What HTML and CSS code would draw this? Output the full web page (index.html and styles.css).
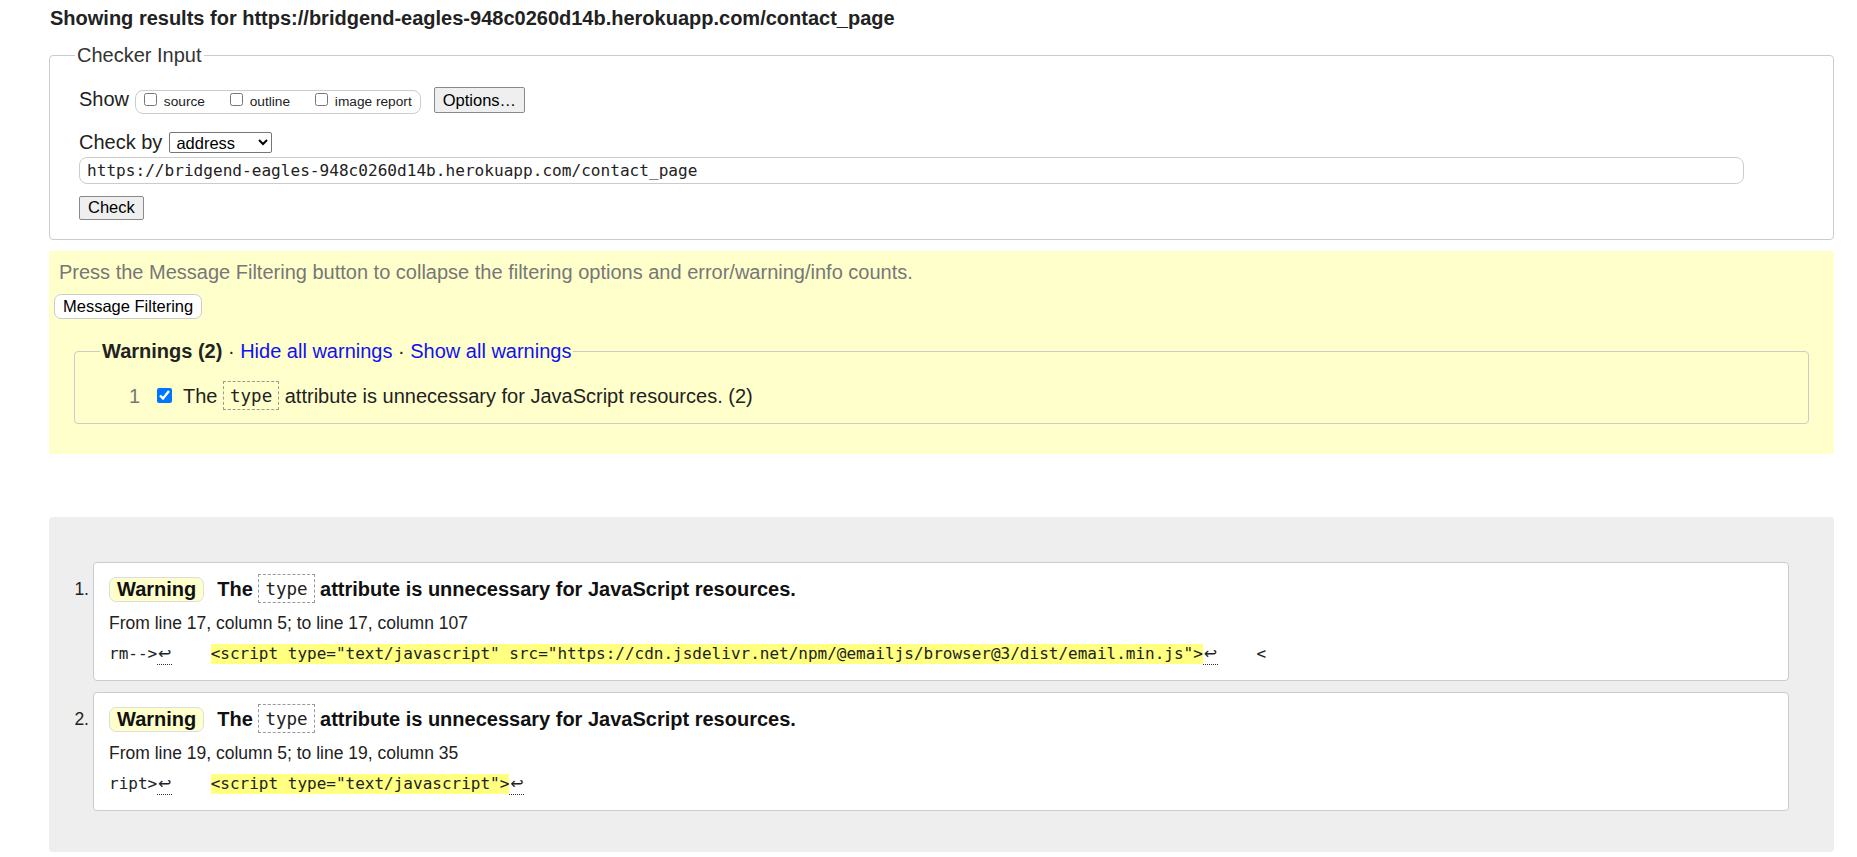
FILE: index.html
```html
<!DOCTYPE html>
<html lang="en">
<head>
<meta charset="utf-8">
<title>Showing results for contact_page - Nu Html Checker</title>
<link rel="stylesheet" href="styles.css">
</head>
<body>
<h2 class="title">Showing results for https://bridgend-eagles-948c0260d14b.herokuapp.com/contact_page</h2>
<form class="checker">
  <fieldset class="checker-input">
    <legend>Checker Input</legend>
    <div class="row show-row">
      <span class="label">Show</span>
      <span class="group"><label><input type="checkbox"> source</label><label><input type="checkbox"> outline</label><label><input type="checkbox"> image report</label></span>
      <button type="button" class="btn options">Options…</button>
    </div>
    <div class="row by-row">
      <span class="label">Check by</span>
      <select class="select"><option>address</option></select>
    </div>
    <input class="url" type="text" value="https://bridgend-eagles-948c0260d14b.herokuapp.com/contact_page">
    <div class="submit"><button type="button" class="btn check">Check</button></div>
  </fieldset>
</form>

<section class="filters">
  <p class="hint">Press the Message Filtering button to collapse the filtering options and error/warning/info counts.</p>
  <button type="button" class="btn-filter">Message Filtering</button>
  <fieldset class="warnings">
    <legend><strong>Warnings (2)</strong> · <a href="#">Hide all warnings</a> · <a href="#">Show all warnings</a></legend>
    <div class="filter-row">
      <span class="count">1</span>
      <input class="filter-check" type="checkbox" checked>
      <span class="filter-text">The <code class="kw">type</code> attribute is unnecessary for JavaScript resources. (2)</span>
    </div>
  </fieldset>
</section>

<ol class="results">
  <li class="result">
    <span class="num">1.</span>
    <div class="card">
      <p class="msg"><span class="badge">Warning</span>The <code class="kw">type</code> attribute is unnecessary for JavaScript resources.</p>
      <p class="loc">From line 17, column 5; to line 17, column 107</p>
      <p class="extract">rm--&gt;<span class="ret">↩</span>    <mark>&lt;script type="text/javascript" src="https://cdn.jsdelivr.net/npm/@emailjs/browser@3/dist/email.min.js"&gt;</mark><span class="ret">↩</span>    &lt;</p>
    </div>
  </li>
  <li class="result">
    <span class="num">2.</span>
    <div class="card">
      <p class="msg"><span class="badge">Warning</span>The <code class="kw">type</code> attribute is unnecessary for JavaScript resources.</p>
      <p class="loc">From line 19, column 5; to line 19, column 35</p>
      <p class="extract">ript&gt;<span class="ret">↩</span>    <mark>&lt;script type="text/javascript"&gt;</mark><span class="ret">↩</span></p>
    </div>
  </li>
</ol>
</body>
</html>
```

FILE: styles.css
```css
html {
  background: #fff;
}

body {
  margin: 0;
  padding: 0 23px 0 49px;
  font-family: "Liberation Sans", Arial, sans-serif;
  color: #222;
}

.title {
  margin: 7px 0 0 1px;
  font-size: 20px;
  line-height: 23px;
  font-weight: bold;
  color: #222;
}

/* ---------- Checker input ---------- */
.checker {
  margin: 14px 0 11px;
}

.checker-input {
  margin: 0;
  padding: 20px 29px 19px;
  border: 1px solid #ccc;
  border-radius: 4px;
  min-width: 0;
}

.checker-input legend {
  font-size: 20px;
  line-height: 23px;
  padding: 0 2px;
  margin-left: -4px;
  color: #333;
}

.row {
  display: flex;
  align-items: baseline;
}

.by-row {
  margin-top: 17px;
}

.label {
  font-size: 20px;
  line-height: 23px;
  color: #222;
}

.group {
  display: inline-block;
  margin-left: 6px;
  padding: 1px 8px;
  border: 1px solid #ccc;
  border-radius: 8px;
  font-size: 13.7px;
  line-height: 20px;
  color: #222;
}

.group label + label {
  margin-left: 25px;
}

.group input {
  width: 13px;
  height: 13px;
  margin: 0 3px 1px 0;
  vertical-align: baseline;
}

.btn {
  box-sizing: border-box;
  font-family: "Liberation Sans", Arial, sans-serif;
  font-size: 16.5px;
  color: #000;
  background: #efefef;
  border: 1px solid #8a8a8a;
  border-radius: 2px;
  padding: 0 8px;
}

.options {
  margin-left: 13px;
  height: 26px;
}

.select {
  box-sizing: border-box;
  margin-left: 7px;
  width: 103px;
  height: 21px;
  font-family: "Liberation Sans", Arial, sans-serif;
  font-size: 16.5px;
  color: #000;
  background: #fff;
  border: 1px solid #767676;
  border-radius: 2px;
  padding: 0 0 0 2px;
}

.url {
  display: block;
  box-sizing: border-box;
  margin: 3px 0 0;
  width: calc(100% - 60px);
  height: 27px;
  padding: 0 7px;
  border: 1px solid #ccc;
  border-radius: 8px;
  font-family: "DejaVu Sans Mono", "Liberation Mono", monospace;
  font-size: 16.1px;
  color: #222;
  background: #fff;
}

.submit {
  margin-top: 12px;
  display: flex;
}

.check {
  height: 24px;
}

/* ---------- Filters ---------- */
.filters {
  background: #ffffcc;
  padding: 10px 5px;
}

.hint {
  margin: 0 0 0 5px;
  font-size: 20px;
  line-height: 23px;
  color: #777;
}

.btn-filter {
  display: block;
  box-sizing: border-box;
  margin-top: 10px;
  height: 25px;
  padding: 0 8px;
  background: #fff;
  border: 1px solid #ccc;
  border-radius: 7px;
  font-family: "Liberation Sans", Arial, sans-serif;
  font-size: 16.5px;
  color: #000;
}

.warnings {
  margin: 21px 20px 20px;
  padding: 18px 25px 12px;
  border: 1px solid #ccc;
  border-radius: 4px;
  min-width: 0;
}

.warnings legend {
  padding: 0 2px;
  font-size: 20px;
  line-height: 23px;
  color: #222;
}

.warnings legend strong {
  color: #222;
}

.warnings legend a {
  color: #1010f5;
  text-decoration: none;
}

.filter-row {
  display: flex;
  align-items: center;
  height: 30px;
  font-size: 20px;
  line-height: 30px;
}

.count {
  width: 40px;
  text-align: right;
  color: #777;
}

.filter-check {
  width: 15px;
  height: 15px;
  margin: 0 11px 0 17px;
}

.kw {
  display: inline-block;
  vertical-align: top;
  padding: 1px 6px 0;
  border: 1px dashed #999;
  font-family: "DejaVu Sans Mono", "Liberation Mono", monospace;
  font-size: 17.5px;
  font-weight: normal;
  line-height: 26px;
  color: #222;
}

/* ---------- Results ---------- */
.results {
  list-style: none;
  margin: 63px 0 0;
  padding: 45px 45px 41px 0;
  background: #eee;
  border-radius: 4px;
}

.result {
  display: flex;
}

.result + .result {
  margin-top: 11px;
}

.num {
  flex: none;
  box-sizing: border-box;
  width: 44px;
  padding: 12px 4px 0 0;
  text-align: right;
  font-size: 17.5px;
  line-height: 30px;
  color: #222;
}

.card {
  flex: 1;
  min-width: 0;
  background: #fff;
  border: 1px solid #ccc;
  border-radius: 4px;
  padding: 11px 15px 15px;
}

.msg {
  margin: 0;
  font-size: 20px;
  line-height: 30px;
  font-weight: bold;
  color: #111;
}

.badge {
  display: inline-block;
  margin-right: 13px;
  padding: 0 7px;
  line-height: 23px;
  background: #ffffcc;
  border: 1px solid #ddd;
  border-radius: 7px;
}

.loc {
  margin: 7px 0 0;
  font-size: 17.5px;
  line-height: 24px;
  color: #222;
}

.extract {
  margin: 9px 0 0;
  font-family: "DejaVu Sans Mono", "Liberation Mono", monospace;
  font-size: 16px;
  line-height: 20px;
  white-space: pre;
  color: #222;
}

.extract mark {
  background: #ffff80;
  color: #222;
  padding-bottom: 1px;
}

.ret {
  display: inline-block;
  width: 15px;
  text-align: center;
  font-family: "DejaVu Sans", sans-serif;
  border-bottom: 1px dotted #333;
  line-height: 20px;
}
```
